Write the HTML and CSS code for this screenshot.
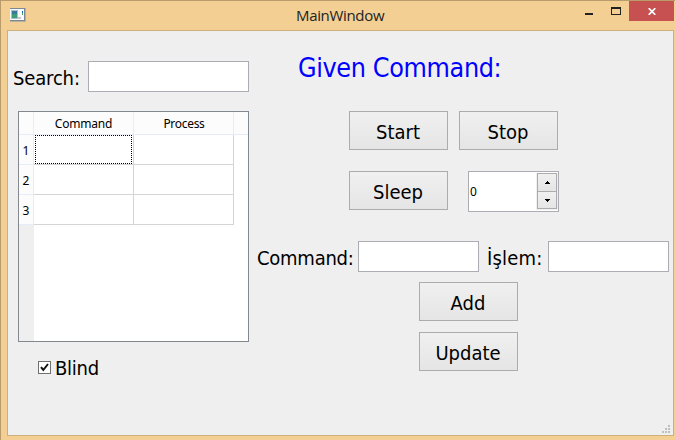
FILE: index.html
```
<!DOCTYPE html>
<html lang="en">
<head>
<meta charset="utf-8">
<title>MainWindow</title>
<link rel="stylesheet" href="styles.css">
</head>
<body>
<div class="window">
  <header class="titlebar">
    <svg class="app-icon" width="16" height="14" viewBox="0 0 16 14" shape-rendering="crispEdges">
      <rect width="16" height="14" fill="#b9b09c"/><rect width="15" height="13" fill="#7c8794"/>
      <rect y="1" width="14" height="11" fill="#fafafa"/>
      <rect x="1" y="2" width="7" height="9" fill="#a9bfd0"/>
      <rect x="2" y="3" width="5" height="4" fill="#3a7b9c"/><rect x="2" y="6" width="5" height="4" fill="#409b78"/>
      <rect x="12" y="3" width="1" height="2" fill="#2460b8"/><rect x="12" y="5" width="1" height="2" fill="#48ad68"/>
      <rect x="8" y="9" width="3" height="2" fill="#c8c8c8"/>
    </svg>
    <h1 class="title">MainWindow</h1>
    <div class="controls">
      <svg class="minmax" width="36" height="20" viewBox="0 0 36 20" shape-rendering="crispEdges">
        <rect x="0" y="12" width="8" height="2" fill="#222"/>
        <path fill="#222" fill-rule="evenodd" d="M26 6h10v8H26zM27 8v5h8V8z"/>
      </svg>
      <div class="close">
        <svg width="8" height="7" viewBox="0 0 8 7"><path d="M.7.2 7.3 6.8M7.3.2.7 6.8" stroke="#fff" stroke-width="1.7"/></svg>
      </div>
    </div>
  </header>
  <main class="content">
    <section class="left">
      <div class="search-row"><label class="text t-search" for="search">Search:</label><input class="field search" id="search"></div>
      <div class="table">
        <div class="th corner"></div><div class="th"><span class="small t-hc">Command</span></div><div class="th"><span class="small t-hp">Process</span></div><div class="th last"></div>
        <div class="rh small">1</div><div class="cell current"></div><div class="cell"></div><div></div>
        <div class="rh small">2</div><div class="cell"></div><div class="cell"></div><div></div>
        <div class="rh small">3</div><div class="cell"></div><div class="cell"></div><div></div>
        <div class="gutter"></div>
      </div>
      <div class="check-row">
        <svg width="13" height="13" viewBox="0 0 13 13"><rect x=".5" y=".5" width="12" height="12" fill="#fff" stroke="#707070"/><path d="M3 6.2 5.3 9 10 3" fill="none" stroke="#111" stroke-width="2"/></svg>
        <span class="text t-blind">Blind</span>
      </div>
    </section>
    <section class="right">
      <h2 class="heading">Given Command:</h2>
      <div class="row run"><button class="btn"><span class="t-start">Start</span></button><button class="btn"><span class="t-stop">Stop</span></button></div>
      <div class="row pause"><button class="btn"><span class="t-sleep">Sleep</span></button>
        <div class="spin"><span class="small">0</span>
          <div class="steps">
            <div class="step"><svg width="5" height="3" viewBox="0 0 5 3" shape-rendering="crispEdges"><path d="M2 0h1v1h1v1h1v1H0V2h1V1h1z"/></svg></div>
            <div class="step"><svg width="5" height="3" viewBox="0 0 5 3" shape-rendering="crispEdges"><path d="M0 0h5v1H4v1H3v1H2V2H1V1H0z"/></svg></div>
          </div>
        </div>
      </div>
      <div class="form">
        <label class="text t-command" for="command">Command:</label><input class="field" id="command">
        <label class="text t-islem" for="islem">İşlem:</label><input class="field" id="islem">
      </div>
      <div class="actions"><button class="btn"><span class="t-add">Add</span></button><button class="btn"><span class="t-update">Update</span></button></div>
      <svg class="grip" width="8" height="8" viewBox="0 0 8 8" shape-rendering="crispEdges"><path fill="#bfbfbf" d="M6 0h2v2H6zM3 3h2v2H3zM6 3h2v2H6zM0 6h2v2H0zM3 6h2v2H3zM6 6h2v2H6z"/></svg>
    </section>
  </main>
</div>
</body>
</html>
```
FILE: styles.css
```
* { box-sizing: border-box; }
body { margin: 0; overflow: hidden; font: 20px/24px "DejaVu Sans Condensed", "DejaVu Sans", sans-serif; font-stretch: condensed; color: #000; }
h1, h2 { margin: 0; font-weight: 400; }
.window { width: 675px; height: 440px; background: #f3cf94; border: solid #b99c6b; border-width: 1px 0 0 1px; padding: 0 1px 4px 6px; display: flex; flex-direction: column; }
.titlebar { height: 29px; display: flex; align-items: flex-start; }
.app-icon { margin: 7px 0 0 3px; }
.title { flex: 1; font: 15px/28px "Open Sans", sans-serif; color: #222; padding-left: 270px; letter-spacing: -.33px; white-space: nowrap; }
.controls { display: flex; width: 89px; justify-content: space-between; }
.close { width: 45px; height: 20px; background: #c75050; display: flex; align-items: center; justify-content: center; padding-top: 1px; }
.content { height: 406px; width: 667px; border: 1px solid #cdb07d; background: #efefef; display: flex; }
.left { width: 241px; padding: 30px 0 0 10px; }
.search-row { display: flex; justify-content: flex-end; align-items: center; }
.text { white-space: nowrap; }
.field { width: 121px; height: 31px; margin: 0; padding: 0 4px; border: 1px solid #abadb3; background: #fff; outline: none; }
.search { width: 161px; }
.search-row .text { width: 75px; margin-left: -5px; padding-top: 3px; }
.search-row .search { flex: none; }
.table { margin-top: 19px; width: 231px; height: 231px; border: 1px solid #828790; background: #fff; display: grid; grid-template-columns: 15px 100px 100px 14px; grid-template-rows: 23px 30px 30px 30px 1fr; }
.th { background: #fcfcfc; border: solid #e5edfb; border-width: 0 1px 1px 0; display: flex; align-items: center; justify-content: center; padding-top: 2px; }
.last { border-right: 0; }
.small { font: 12px/14px "Noto Sans", sans-serif; }
.t-hc { letter-spacing: -.2px; }
.t-hp { letter-spacing: -.3px; padding-left: 1px; }
.rh { background: #fcfcfc; border: solid #e5edfb; border-width: 0 1px 1px 0; display: flex; align-items: center; justify-content: center; padding-top: 3px; }
.cell { border: solid #d5d5d5; border-width: 0 1px 1px 0; }
.current { padding: 0 1px 0 1px; display: flex; }
.current::before { content: ""; flex: 1; border: 1px dotted #000; }
.gutter { background: #efefef; }
.check-row { display: flex; align-items: center; margin: 13px 0 0 20px; gap: 4px; }
.check-row .text { padding-top: 1px; margin-bottom: -1px; }
.right { flex: 1; position: relative; }
.heading { font-size: 26.67px; line-height: 34px; color: #00f; margin: 20px 0 0 49px; letter-spacing: -.36px; white-space: nowrap; }
.btn { width: 99px; height: 39px; padding: 3px 1px 0 0; border: 1px solid #acacac; background: linear-gradient(#f0f0f0, #e5e5e5); font: inherit; color: #000; white-space: nowrap; display: flex; align-items: center; justify-content: center; }
.row { display: flex; margin-left: 100px; }
.run { gap: 11px; margin-top: 26px; }
.pause { gap: 20px; margin-top: 21px; }
.spin { width: 91px; height: 41px; border: 1px solid #abadb3; background: #fff; display: flex; justify-content: space-between; align-items: flex-start; padding: 1px 0 0 1px; }
.spin .small { padding-top: 12px; }
.steps { width: 22px; height: 37px; background: #f0f0f0; padding-left: 1px; display: flex; flex-direction: column; }
.step { height: 19px; width: 20px; border: 1px solid #acacac; background: linear-gradient(#f0f0f0, #e5e5e5); display: flex; align-items: center; justify-content: center; }
.step + .step { margin-top: -1px; height: 18px; }
.form { display: flex; align-items: center; margin: 29px 0 0 8px; }
.form .text { padding-top: 3px; }
.t-search { letter-spacing: -.15px; }
.t-blind { letter-spacing: -.25px; }
.t-command { width: 101px; letter-spacing: -.25px; }
.t-islem { width: 69px; padding-left: 8px; letter-spacing: .2px; }
.actions { margin: 10px 0 0 170px; display: flex; flex-direction: column; gap: 11px; }
.grip { position: absolute; right: 3px; bottom: 2px; }
```
